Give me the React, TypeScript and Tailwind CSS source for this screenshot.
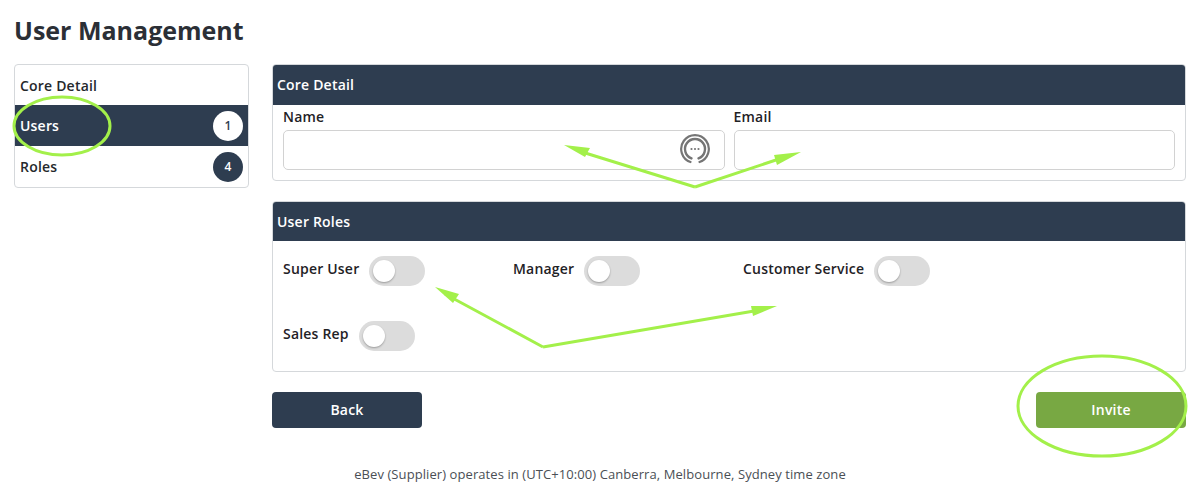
const roles = [
  { label: 'Super User', width: 'w-[230px]' },
  { label: 'Manager', width: 'w-[230px]' },
  { label: 'Customer Service', width: 'w-[300px]' },
];

function Toggle() {
  return (
    <span className="flex h-[30px] w-[56px] shrink-0 items-center rounded-full bg-[#dcdcdc] pl-[4px]">
      <span className="h-[22px] w-[22px] rounded-full bg-white shadow-[0_1px_2px_rgba(0,0,0,0.3)]" />
    </span>
  );
}

function RoleToggle({ label, className }: { label: string; className?: string }) {
  return (
    <div className={`flex h-[30px] items-center gap-[10px] ${className ?? ''}`}>
      <span className="relative -top-[3px] text-[14px] font-semibold tracking-[0.2px] text-[#1f2226]">{label}</span>
      <Toggle />
    </div>
  );
}

function MenuRow({ label, count, active, first }: { label: string; count?: number; active?: boolean; first?: boolean }) {
  return (
    <div
      className={`flex items-center justify-between pl-[5px] pr-[5px] text-[14px] font-semibold tracking-[0.2px] ${
        first ? 'h-[40px]' : 'h-[41px]'
      } ${active ? 'bg-[#2e3d50] text-white' : 'text-[#25282c]'}`}
    >
      <span>{label}</span>
      {count !== undefined && (
        <span
          className={`flex h-[30px] w-[30px] items-center justify-center rounded-full text-[12px] ${
            active ? 'bg-white text-[#2e3d50]' : 'bg-[#2e3d50] text-white'
          }`}
        >
          {count}
        </span>
      )}
    </div>
  );
}

function ChatIcon() {
  return (
    <svg width="30" height="30" viewBox="0 0 30 30" fill="none" stroke="#757575" className="absolute right-[14px] top-[3px]">
      <path d="M10.5 28A13.8 13.8 0 1 1 19.5 28" strokeWidth="2.2" strokeLinecap="round" />
      <path d="M11.5 24.4A10 10 0 1 1 18.5 24.4" strokeWidth="2.4" strokeLinecap="round" />
      <circle cx="11.5" cy="15" r="1.1" fill="#757575" stroke="none" />
      <circle cx="15" cy="15" r="1.1" fill="#757575" stroke="none" />
      <circle cx="18.5" cy="15" r="1.1" fill="#757575" stroke="none" />
    </svg>
  );
}

function Field({ label, icon }: { label: string; icon?: boolean }) {
  return (
    <div className="flex-1">
      <label className="block h-[25px] pt-[1px] text-[14px] font-semibold leading-[22px] tracking-[0.2px] text-[#1f2226]">{label}</label>
      <div className="relative h-[40px] rounded-[5px] border border-[#d2d2d2] bg-white">{icon && <ChatIcon />}</div>
    </div>
  );
}

function Annotations() {
  const green = '#a3f04a';
  return (
    <svg width="1199" height="489" viewBox="0 0 1199 489" fill="none" className="pointer-events-none absolute left-0 top-0">
      <ellipse cx="62" cy="126" rx="48" ry="29" stroke={green} strokeWidth="3" />
      <ellipse cx="1102" cy="406" rx="84" ry="50" stroke={green} strokeWidth="3" />
      <path d="M695 187L582 152M695 187L782 158" stroke={green} strokeWidth="3" />
      <path d="M564 145L590 148L585 157Z" fill={green} />
      <path d="M801 152L777 165L774 155Z" fill={green} />
      <path d="M543 347L445 294M543 347L760 310" stroke={green} strokeWidth="3" />
      <path d="M435 287L459 294L453 303Z" fill={green} />
      <path d="M777 306L753 316L751 306Z" fill={green} />
    </svg>
  );
}

export default function App() {
  return (
    <div className="relative h-[489px] w-[1199px] overflow-hidden bg-white pl-[14px] pr-[13px] font-['Open_Sans',sans-serif]">
      <h1 className="h-[64px] pt-[12px] text-[25px] font-bold leading-[36px] text-[#2b2f36]">User Management</h1>
      <div className="flex gap-[23px]">
        <aside className="h-[124px] w-[235px] shrink-0 overflow-hidden rounded-[4px] border border-[#d5d8db] bg-white">
          <MenuRow label="Core Detail" first />
          <MenuRow label="Users" count={1} active />
          <MenuRow label="Roles" count={4} />
        </aside>
        <main className="flex-1">
          <section className="h-[117px] overflow-hidden rounded-[4px] border border-[#d5d8db]">
            <h2 className="flex h-[40px] items-center bg-[#2e3d50] px-[4px] pb-[1px] text-[14px] font-semibold tracking-[0.2px] text-white">Core Detail</h2>
            <div className="flex gap-[9px] pl-[10px] pr-[10px]">
              <Field label="Name" icon />
              <Field label="Email" />
            </div>
          </section>
          <section className="mt-[20px] h-[171px] overflow-hidden rounded-[4px] border border-[#d5d8db]">
            <h2 className="flex h-[39px] items-center bg-[#2e3d50] px-[4px] pb-[1px] text-[14px] font-semibold tracking-[0.2px] text-white">User Roles</h2>
            <div className="pl-[10px] pt-[15px]">
              <div className="flex">
                {roles.map((r) => (
                  <RoleToggle key={r.label} label={r.label} className={r.width} />
                ))}
              </div>
              <RoleToggle label="Sales Rep" className="mt-[35px]" />
            </div>
          </section>
          <div className="mt-[20px] flex justify-between">
            <button className="h-[36px] w-[150px] rounded-[4px] bg-[#2e3d50] pb-[2px] text-[14px] font-semibold tracking-[0.2px] text-white">Back</button>
            <button className="h-[36px] w-[150px] rounded-[4px] bg-[#78a843] pb-[2px] text-[14px] font-semibold tracking-[0.2px] text-white">Invite</button>
          </div>
        </main>
      </div>
      <p className="mt-[37px] text-center text-[13px] leading-[18px] tracking-[0.08px] text-[#4a4f55]">
        eBev (Supplier) operates in (UTC+10:00) Canberra, Melbourne, Sydney time zone
      </p>
      <Annotations />
    </div>
  );
}
